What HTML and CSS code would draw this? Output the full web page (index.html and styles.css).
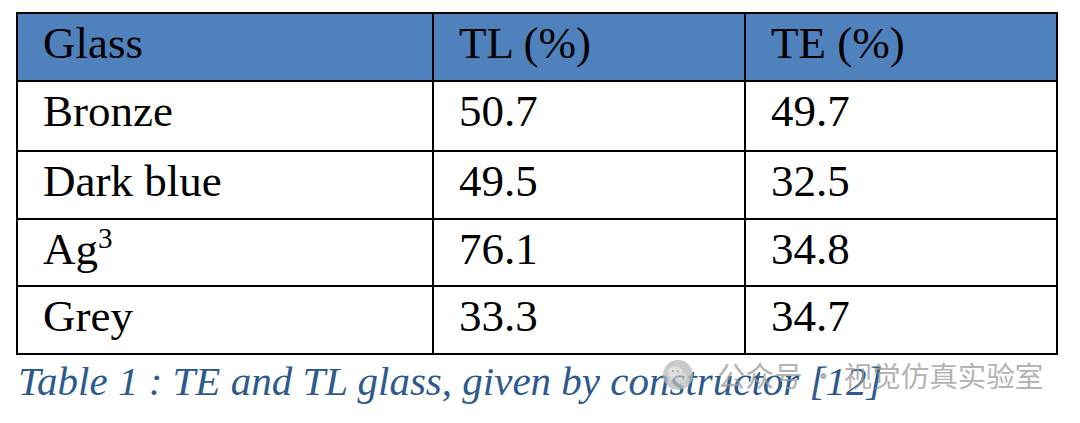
FILE: index.html
```html
<!DOCTYPE html>
<html lang="en">
<head>
<meta charset="utf-8">
<title>Table 1</title>
<link rel="stylesheet" href="styles.css">
</head>
<body>
<div class="page">
  <div class="glass-table">
    <div class="cell head">Glass</div>
    <div class="cell head">TL (%)</div>
    <div class="cell head">TE (%)</div>

    <div class="cell">Bronze</div>
    <div class="cell">50.7</div>
    <div class="cell">49.7</div>

    <div class="cell">Dark blue</div>
    <div class="cell">49.5</div>
    <div class="cell">32.5</div>

    <div class="cell">Ag<sup class="sup">3</sup></div>
    <div class="cell">76.1</div>
    <div class="cell">34.8</div>

    <div class="cell">Grey</div>
    <div class="cell">33.3</div>
    <div class="cell">34.7</div>
  </div>
  <p class="caption">Table 1 : TE and TL glass, given by constructor [12]</p>

  <div class="watermark">
    <svg class="wm-icon" viewBox="0 0 30 30" width="30" height="30" aria-hidden="true">
      <circle cx="15" cy="15" r="15" fill="#b9b9b9"/>
      <ellipse cx="12.5" cy="12.5" rx="7.5" ry="6.2" fill="#d6d6d6"/>
      <path d="M8.5 17.5 L7.6 20.4 L11 18.6 Z" fill="#d6d6d6"/>
      <ellipse cx="18.5" cy="17.5" rx="6" ry="5" fill="#cbcbcb"/>
      <path d="M21.6 21.4 L22.6 23.6 L19.8 22.3 Z" fill="#cbcbcb"/>
      <circle cx="10" cy="11" r="1.1" fill="#8f8f8f"/>
      <circle cx="14.6" cy="11" r="1.1" fill="#8f8f8f"/>
      <circle cx="16.6" cy="16.6" r="0.9" fill="#9a9a9a"/>
      <circle cx="20.4" cy="16.6" r="0.9" fill="#9a9a9a"/>
    </svg>
    <span class="wm-text">公众号 · 视觉仿真实验室</span>
  </div>
</div>
</body>
</html>
```

FILE: styles.css
```css
html, body {
  margin: 0;
  padding: 0;
  background: #ffffff;
}

.page {
  position: relative;
  width: 1080px;
  height: 423px;
  padding: 12px 0 0 16px;
  box-sizing: border-box;
  overflow: hidden;
}

.glass-table {
  display: grid;
  width: 1040px;
  grid-template-columns: 416px 312px 312px;
  grid-template-rows: 68px 70px 68px 67px 68px;
  border-left: 2px solid #000;
  border-top: 2px solid #000;
  font-family: "Liberation Serif", "Times New Roman", serif;
  font-size: 45px;
  line-height: 52px;
  color: #000;
}

.cell {
  box-sizing: border-box;
  border-right: 2px solid #000;
  border-bottom: 2px solid #000;
  padding: 3px 0 0 25px;
  white-space: nowrap;
}

.head {
  background: #4f81bd;
}

.sup {
  font-size: 29px;
  line-height: 29px;
  vertical-align: super;
}

.caption {
  margin: 3px 0 0 2px;
  font-family: "Liberation Serif", "Times New Roman", serif;
  font-style: italic;
  font-size: 41px;
  line-height: 46px;
  color: #2d5a8e;
  white-space: nowrap;
}

.watermark {
  position: absolute;
  left: 663px;
  top: 360px;
  display: flex;
  align-items: center;
  gap: 24px;
  opacity: 0.75;
  pointer-events: none;
}

.wm-icon {
  display: block;
  flex: none;
}

.wm-text {
  font-family: "Noto Sans CJK SC", "Noto Sans", sans-serif;
  font-size: 28.5px;
  line-height: 30px;
  color: #9a9a9a;
  white-space: nowrap;
}
```
